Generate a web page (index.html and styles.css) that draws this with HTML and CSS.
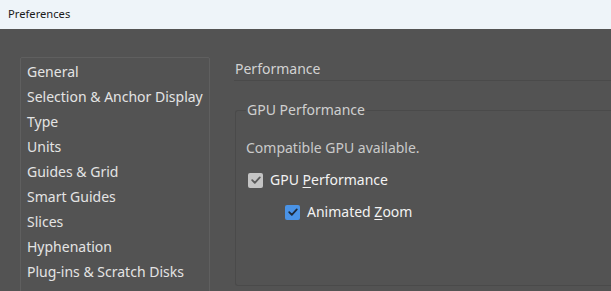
FILE: index.html
```html
<!DOCTYPE html>
<html>
<head>
<meta charset="utf-8">
<link rel="stylesheet" href="styles.css">
</head>
<body>
<div class="titlebar">Preferences</div>
<div class="main">
  <ul class="nav">
    <li>General</li>
    <li>Selection &amp; Anchor Display</li>
    <li>Type</li>
    <li>Units</li>
    <li>Guides &amp; Grid</li>
    <li>Smart Guides</li>
    <li>Slices</li>
    <li>Hyphenation</li>
    <li>Plug-ins &amp; Scratch Disks</li>
    <li>User Interface</li>
  </ul>
  <div class="content">
    <div class="section-title">Performance</div>
    <fieldset class="group">
      <legend>GPU Performance</legend>
      <div class="note">Compatible GPU available.</div>
      <label class="check">
        <span class="box grey"><svg viewBox="0 0 14 14"><path d="M3.2 7.2 L5.8 9.8 L10.8 4.4" /></svg></span>
        <span>GPU <u>P</u>erformance</span>
      </label>
      <label class="check sub">
        <span class="box blue"><svg viewBox="0 0 14 14"><path d="M3.2 7.2 L5.8 9.8 L10.8 4.4" /></svg></span>
        <span>Animated <u>Z</u>oom</span>
      </label>
    </fieldset>
  </div>
</div>
</body>
</html>
```

FILE: styles.css
```css
* { box-sizing: border-box; }
html, body { margin: 0; padding: 0; }
body {
  width: 611px;
  height: 291px;
  overflow: hidden;
  background: #535353;
  font-family: "Noto Sans", "Open Sans", sans-serif;
}
.titlebar {
  height: 29px;
  background: #eef4f9;
  color: #1a1a1a;
  font-size: 11.2px;
  padding-left: 8px;
  line-height: 28px;
}
.main {
  display: flex;
  padding: 28px 0 0 20px;
  gap: 24px;
}
.nav {
  list-style: none;
  margin: 0;
  padding: 2px 0 0 6px;
  width: 190px;
  height: 260px;
  border: 1px solid #5f5f5f;
  border-radius: 2px;
  flex: none;
}
.nav li {
  height: 25px;
  line-height: 24px;
  font-size: 14px;
  color: #e4e4e4;
  white-space: nowrap;
}
.content {
  flex: 1;
  padding-top: 1px;
}
.section-title {
  font-size: 14px;
  color: #d2d2d2;
  line-height: 22px;
  height: 23px;
  border-bottom: 1px solid #4a4a4a;
  padding-left: 1px;
}
.group {
  margin: 19px 0 0 1px;
  border: 1px solid #4a4a4a;
  border-right: none;
  border-radius: 3px 0 0 3px;
  padding: 0 0 0 10px;
  height: 186px;
}
.group legend {
  font-size: 14px;
  color: #cfcfcf;
  padding: 0 1px;
  margin-left: 0;
  line-height: 20px;
}
.note {
  font-size: 14px;
  color: #cacaca;
  line-height: 20px;
  margin-top: 18px;
}
.check {
  display: flex;
  align-items: center;
  gap: 7px;
  font-size: 14px;
  color: #f2f2f2;
  line-height: 20px;
  margin-top: 12px;
  margin-left: 2px;
}
.check.sub {
  margin-left: 39px;
  margin-top: 12px;
}
.check u { text-decoration-thickness: 1px; text-underline-offset: 2px; }
.box {
  width: 15px;
  height: 15px;
  border-radius: 2px;
  display: flex;
  align-items: center;
  justify-content: center;
  flex: none;
}
.box svg { width: 14px; height: 14px; }
.box path { fill: none; stroke-width: 1.8; stroke-linecap: round; stroke-linejoin: round; }
.box.grey { background: #c4c4c4; }
.box.grey path { stroke: #5a5a5a; }
.box.blue { background: #4a93e6; }
.box.blue path { stroke: #1e2a3a; }
```
